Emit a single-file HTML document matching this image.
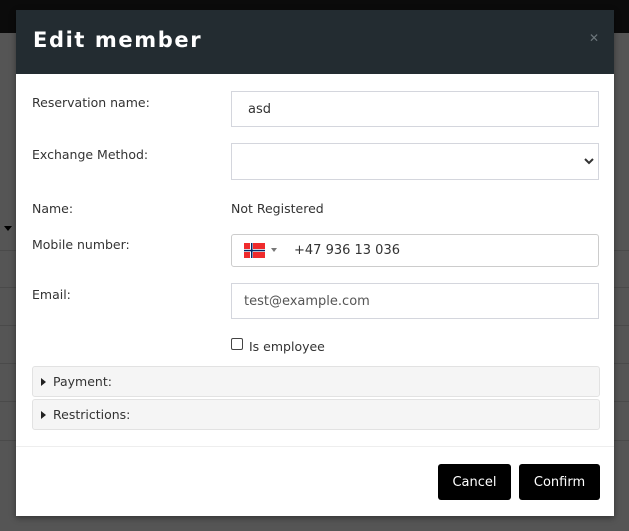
<!DOCTYPE html>
<html><head><style>
*{box-sizing:border-box;margin:0;padding:0}
body{width:629px;height:531px;overflow:hidden;background:#555;font-family:"DejaVu Sans",sans-serif;position:relative}
.top{position:absolute;left:0;top:0;width:629px;height:33px;background:#0b0b0b}
.row{position:absolute;left:0;width:629px;height:1px;background:#4a4a4a}
.modal{position:absolute;left:16px;top:10px;width:598px;height:506px;background:#fff;box-shadow:0 2px 6px rgba(0,0,0,.4)}
.hdr{height:64px;background:#232c31;position:relative}
.hdr h1{position:absolute;left:17px;top:18px;color:#fff;font-size:21px;font-weight:bold;letter-spacing:1.6px}
.x{position:absolute;right:15px;top:21px;color:#6d777c;font-size:12px}
.lbl{position:absolute;left:16px;font-size:12.5px;color:#333}
.inp{position:absolute;left:215px;width:368px;border:1px solid #d4d6dd;font-size:13px;color:#333}
.acc{position:absolute;left:16px;width:568px;height:31px;background:#f5f5f5;border:1px solid #e2e2e2;border-radius:3px;font-size:12.5px;color:#333;padding:7px 0 0 20px}
.acc:before{content:"";position:absolute;left:8px;top:11px;border-left:5px solid #222;border-top:4px solid transparent;border-bottom:4px solid transparent}
.btn{position:absolute;top:454px;height:36px;background:#000;color:#fff;border-radius:3px;font-size:13px;text-align:center;line-height:37px}
</style></head><body>
<div class="top"></div>
<div class="row" style="top:250px"></div><div class="row" style="top:287px"></div><div class="row" style="top:325px"></div><div class="row" style="top:363px"></div><div class="row" style="top:401px"></div><div class="row" style="top:440px"></div>
<div style="position:absolute;left:4px;top:226px;border-top:5px solid #000;border-left:4px solid transparent;border-right:4px solid transparent"></div>
<div class="modal">
<div class="hdr"><h1>Edit member</h1><div class="x">✕</div></div>
<div class="lbl" style="top:85px">Reservation name:</div>
<div class="inp" style="top:81px;height:36px;padding:10px 16px">asd</div>
<div class="lbl" style="top:137px">Exchange Method:</div>
<div class="inp" style="top:133px;height:37px"><svg style="position:absolute;right:4px;top:13px" width="10" height="8"><path d="M1 2l4 4 4-4" stroke="#333" stroke-width="2" fill="none"/></svg></div>
<div class="lbl" style="top:191px">Name:</div>
<div class="lbl" style="top:191px;left:215px">Not Registered</div>
<div class="lbl" style="top:227px">Mobile number:</div>
<div class="inp" style="top:224px;height:33px;border-radius:3px;border-color:#ccc">
<svg style="position:absolute;left:12px;top:8px" width="21" height="15"><rect width="21" height="15" fill="#ef2b2d"/><rect x="6" width="3" height="15" fill="#fff"/><rect y="6" width="21" height="3" fill="#fff"/><rect x="7" width="1.5" height="15" fill="#002868"/><rect y="6.8" width="21" height="1.5" fill="#002868"/></svg>
<div style="position:absolute;left:39px;top:13px;border-top:4px solid #777;border-left:3.5px solid transparent;border-right:3.5px solid transparent"></div>
<div style="position:absolute;left:62px;top:8px">+47 936 13 036</div></div>
<div class="lbl" style="top:277px">Email:</div>
<div class="inp" style="top:273px;height:36px;padding:10px 12px;color:#555">test@example.com</div>
<div style="position:absolute;left:215px;top:328px;width:12px;height:12px;border:1px solid #444;border-radius:2px"></div>
<div class="lbl" style="top:329px;left:233px">Is employee</div>
<div class="acc" style="top:356px">Payment:</div>
<div class="acc" style="top:389px">Restrictions:</div>
<div style="position:absolute;left:0;top:436px;width:598px;height:1px;background:#eee"></div>
<div class="btn" style="left:422px;width:73px">Cancel</div>
<div class="btn" style="left:503px;width:81px">Confirm</div>
</div>
</body></html>
